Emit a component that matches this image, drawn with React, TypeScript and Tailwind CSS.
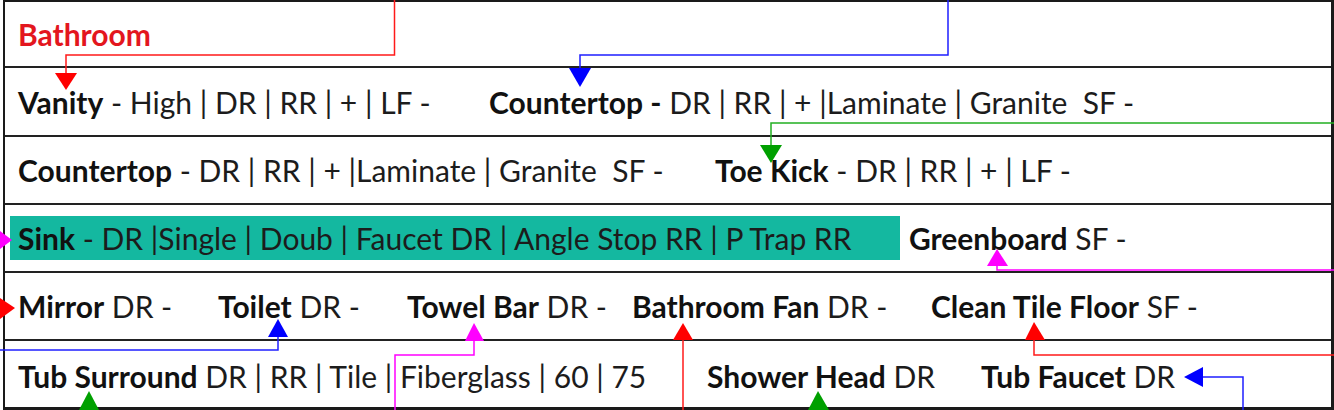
import React from 'react'

type Item = { label: string; rest: string; width?: string }

const Entry: React.FC<Item> = ({ label, rest, width }) => (
  <span className={`shrink-0 whitespace-pre ${width ?? ''}`}>
    <b className="font-bold text-[#111]">{label}</b>
    <span className="text-[#1c1c1c]">{rest}</span>
  </span>
)

const Row: React.FC<{ h: string; children: React.ReactNode; className?: string }> = ({
  h,
  children,
  className,
}) => (
  <div className={`flex items-center border-b-2 border-[#222] ${h} ${className ?? 'pl-[13px]'}`}>
    {children}
  </div>
)

const Connectors = () => (
  <svg
    className="pointer-events-none absolute inset-0"
    width={1334}
    height={410}
    viewBox="0 0 1334 410"
    fill="none"
  >
    {/* red: Bathroom -> Vanity */}
    <polyline points="394.5,0 394.5,55 66,55 66,75" stroke="#ff1a1a" strokeWidth={1.5} />
    <polygon points="55,73 77,73 66,90" fill="#ff0000" />
    {/* blue: top -> Countertop */}
    <polyline points="948,0 948,55 580,55 580,70" stroke="#1f1fff" strokeWidth={1.5} />
    <polygon points="569,68 591,68 580,87" fill="#0000ff" />
    {/* green: right -> Toe Kick */}
    <polyline points="1334,123 771,123 771,146" stroke="#22b022" strokeWidth={1.5} />
    <polygon points="760,145 782,145 771,163" fill="#00a000" />
    {/* magenta: right -> Greenboard */}
    <polyline points="1334,270 997,270 997,264" stroke="#ff00ff" strokeWidth={1.5} />
    <polygon points="987,266 1008,266 997,249" fill="#ff00ff" />
    {/* magenta: left -> Sink */}
    <polygon points="0,231 0,249 12,240" fill="#ff00ff" />
    {/* red: left -> Mirror */}
    <polygon points="0,298 0,319 15,308" fill="#ff0000" />
    {/* blue: left -> Toilet */}
    <polyline points="0,350 278,350 278,336" stroke="#1f1fff" strokeWidth={1.5} />
    <polygon points="268,337 288,337 278,319" fill="#0000ff" />
    {/* magenta: bottom -> Towel Bar */}
    <polyline points="395,410 395,355 474,355 474,340" stroke="#ff00ff" strokeWidth={1.5} />
    <polygon points="465,341 484,341 474,323" fill="#ff00ff" />
    {/* red: bottom -> Bathroom Fan */}
    <polyline points="683,410 683,339" stroke="#ff1a1a" strokeWidth={1.5} />
    <polygon points="673,340 693,340 683,323" fill="#ff0000" />
    {/* red: right -> Clean Tile Floor */}
    <polyline points="1334,355 1034,355 1034,339" stroke="#ff1a1a" strokeWidth={1.5} />
    <polygon points="1025,340 1045,340 1034,322" fill="#ff0000" />
    {/* green: bottom -> Tub Surround, Shower Head */}
    <polygon points="79,410 99,410 89,391" fill="#00a000" />
    <polygon points="808,410 829,410 818,391" fill="#00a000" />
    {/* blue: bottom -> Tub Faucet */}
    <polyline points="1243,410 1243,377 1200,377" stroke="#1f1fff" strokeWidth={1.5} />
    <polygon points="1203,367 1203,387 1184,377" fill="#0000ff" />
  </svg>
)

export default function App() {
  return (
    <div className="relative h-[410px] w-[1334px] overflow-hidden bg-white font-['Lato',sans-serif] text-[30px] leading-none">
      <div className="ml-[3px] flex h-[410px] w-[1331px] flex-col border-t-2 border-b-[3px] border-l-2 border-r-[3px] border-[#1a1a1a]">
        <Row h="h-[66px]">
          <span className="font-bold text-[#e3161e]">Bathroom</span>
        </Row>
        <Row h="h-[69px]">
          <Entry label="Vanity" rest=" - High | DR | RR | + | LF -" width="w-[471px]" />
          <Entry label="Countertop -" rest=" DR | RR | + |Laminate | Granite  SF -" />
        </Row>
        <Row h="h-[68px]">
          <Entry label="Countertop" rest=" - DR | RR | + |Laminate | Granite  SF -" width="w-[697px]" />
          <Entry label="Toe Kick" rest=" - DR | RR | + | LF -" />
        </Row>
        <Row h="h-[68px]" className="pl-[5px]">
          <div className="flex h-[44px] w-[890px] shrink-0 items-center bg-[#14b8a0] pl-[8px]">
            <Entry label="Sink" rest=" - DR |Single | Doub | Faucet DR | Angle Stop RR | P Trap RR" />
          </div>
          <div className="ml-[9px]">
            <Entry label="Greenboard" rest=" SF -" />
          </div>
        </Row>
        <Row h="h-[68px]">
          <Entry label="Mirror" rest=" DR -" width="w-[200px]" />
          <Entry label="Toilet" rest=" DR -" width="w-[189px]" />
          <Entry label="Towel Bar" rest=" DR -" width="w-[225px]" />
          <Entry label="Bathroom Fan" rest=" DR -" width="w-[299px]" />
          <Entry label="Clean Tile Floor" rest=" SF -" />
        </Row>
        <div className="flex h-[66px] items-center pl-[13px] pt-[3px]">
          <Entry label="Tub Surround" rest=" DR | RR | Tile | Fiberglass | 60 | 75" width="w-[689px]" />
          <Entry label="Shower Head" rest=" DR" width="w-[274px]" />
          <Entry label="Tub Faucet" rest=" DR" />
        </div>
      </div>
      <Connectors />
    </div>
  )
}
